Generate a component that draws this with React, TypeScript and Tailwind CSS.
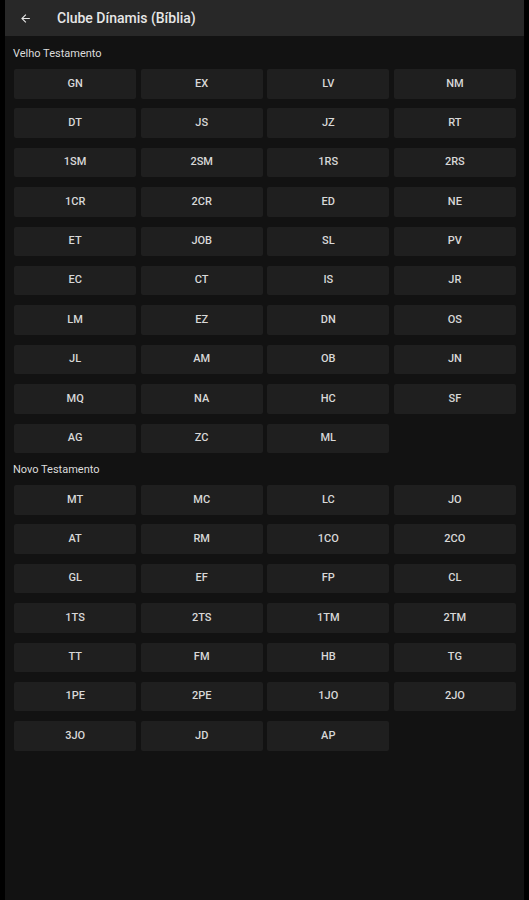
import React from 'react';

const oldTestament = [
  'GN', 'EX', 'LV', 'NM', 'DT', 'JS', 'JZ', 'RT', '1SM', '2SM', '1RS', '2RS',
  '1CR', '2CR', 'ED', 'NE', 'ET', 'JOB', 'SL', 'PV', 'EC', 'CT', 'IS', 'JR',
  'LM', 'EZ', 'DN', 'OS', 'JL', 'AM', 'OB', 'JN', 'MQ', 'NA', 'HC', 'SF',
  'AG', 'ZC', 'ML',
];

const newTestament = [
  'MT', 'MC', 'LC', 'JO', 'AT', 'RM', '1CO', '2CO', 'GL', 'EF', 'FP', 'CL',
  '1TS', '2TS', '1TM', '2TM', 'TT', 'FM', 'HB', 'TG', '1PE', '2PE', '1JO', '2JO',
  '3JO', 'JD', 'AP',
];

const Section: React.FC<{ title: string; books: string[] }> = ({ title, books }) => (
  <div>
    {/* Section label */}
    <div className="h-[32px] pl-[8px] pt-[9.5px] text-[11px] leading-[14px] text-[#dcdcdc]">{title}</div>
    <div className="grid grid-cols-4 gap-x-[4.3px] gap-y-[9.9px] pl-[9px] pr-[8px]">
      {books.map((b) => (
        <button
          key={b}
          className="h-[29.5px] rounded-[2px] bg-[#1f1f1f] text-[11px] font-medium text-[#d8d8d8]"
        >
          {b}
        </button>
      ))}
    </div>
  </div>
);

const App: React.FC = () => {
  return (
    <div
      className="flex min-h-[900px] w-[529px] bg-black"
      style={{ fontFamily: 'Roboto, "Liberation Sans", sans-serif' }}
    >
      <div className="ml-[5px] w-[519px] bg-[#121212]">
        {/* Top bar */}
        <div className="flex h-[36px] items-center bg-[#282828]">
          <svg className="ml-[14px] h-[13px] w-[13px]" viewBox="0 0 24 24" fill="#e8e8e8">
            <path d="M20 11H7.83l5.59-5.59L12 4l-8 8 8 8 1.41-1.41L7.83 13H20v-2z" />
          </svg>
          <span className="ml-[25px] text-[14px] font-medium text-[#e6e6e6]">Clube Dínamis (Bíblia)</span>
        </div>

        <div className="pt-[1px]">
          <Section title="Velho Testamento" books={oldTestament} />
          <Section title="Novo Testamento" books={newTestament} />
        </div>
      </div>
    </div>
  );
};

export default App;
